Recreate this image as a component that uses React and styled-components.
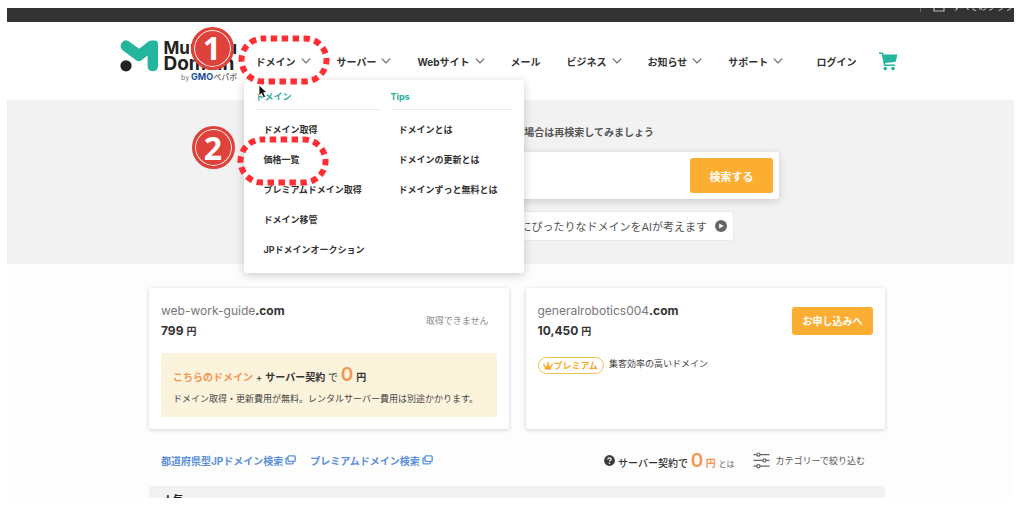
import React from "react";
import styled, { createGlobalStyle, css } from "styled-components";

const mainMenu = [
  { label: "サーバー", more: true },
  { label: "Webサイト", more: true },
  { label: "メール" },
  { label: "ビジネス", more: true },
  { label: "お知らせ", more: true },
  { label: "サポート", more: true },
];

const tips = ["ドメインとは", "ドメインの更新とは", "ドメインずっと無料とは"];

function Chevron() {
  return (
    <svg width="10" height="6" viewBox="0 0 10 6" fill="none" stroke="#666" strokeWidth="1.1">
      <path d="M0.8 0.6L5 5L9.2 0.6" />
    </svg>
  );
}

function NewWindow() {
  return (
    <svg width="11" height="10" viewBox="0 0 11 10" fill="none" stroke="currentColor" strokeWidth="1.3">
      <rect x="3" y="0.8" width="7.2" height="5.6" rx="1" />
      <path d="M3 3H1.9Q1 3 1 3.9V7.8Q1 8.8 2 8.8H7.2Q8.2 8.8 8.2 7.8V6.6" />
    </svg>
  );
}

function DottedRing() {
  return (
    <Ring width="92" height="50" viewBox="0 0 92 50" aria-hidden="true">
      <rect
        x="3.5"
        y="3.5"
        width="85"
        height="43"
        rx="21.5"
        fill="none"
        stroke="#ff2d34"
        strokeWidth="6"
        strokeDasharray="6.5 4.45"
        strokeDashoffset="3.25"
      />
    </Ring>
  );
}

function Logo() {
  return (
    <LogoLink href="#">
      <svg width="39" height="32" viewBox="0 0 39 32">
        <path
          d="M8.6 1.2L19.2 8.8L28.4 1.6Q30 0.4 32 0.4H34.6Q38 0.4 38 3.8V26Q38 31.2 32.8 31.2Q27.6 31.2 27.6 26V15.4L21.6 20.2Q19 22.2 16.2 20.2L2.6 10.2Q-0.6 7.4 1.4 3.2Q4.2 -1.4 8.6 1.2Z"
          fill="#23b59d"
        />
        <circle cx="6" cy="25.8" r="5.6" fill="#222" />
      </svg>
      <LogoText>
        <LogoName>Muumuu</LogoName>
        <LogoName $large>Domain</LogoName>
        <LogoBy>
          by <b>GMO</b>
          <span>ペパボ</span>
        </LogoBy>
      </LogoText>
      <Step $top="-13px" $left="71px">1</Step>
    </LogoLink>
  );
}

function DomainMenu() {
  return (
    <Menu>
      <div>
        <MenuTitle>ドメイン</MenuTitle>
        <MenuList>
          <MenuItem><a href="#">ドメイン取得</a></MenuItem>
          <MenuItem>
            <a href="#">価格一覧</a>
            <RingSpot $top="-9px" $left="-27px"><DottedRing /></RingSpot>
            <Step $top="-19px" $left="-72px">2</Step>
          </MenuItem>
          <MenuItem><a href="#">プレミアムドメイン取得</a></MenuItem>
          <MenuItem><a href="#">ドメイン移管</a></MenuItem>
          <MenuItem><a href="#">JPドメインオークション</a></MenuItem>
        </MenuList>
      </div>
      <div>
        <MenuTitle>Tips</MenuTitle>
        <MenuList>
          {tips.map((t) => (
            <MenuItem key={t}><a href="#">{t}</a></MenuItem>
          ))}
        </MenuList>
      </div>
    </Menu>
  );
}

function Header() {
  return (
    <HeaderBar>
      <HeaderInner>
        <Logo />
        <Nav>
          <NavItem>
            <NavButton type="button" aria-expanded="true">ドメイン<Chevron /></NavButton>
            <DomainMenu />
            <RingSpot $top="-16px" $left="-18px"><DottedRing /></RingSpot>
            <Cursor width="11" height="15" viewBox="0 0 11 15">
              <path
                d="M1 1V11.6L3.5 9.4L5.4 13.8L7.6 12.8L5.7 8.6H9Z"
                fill="#111"
                stroke="#fff"
                strokeWidth="0.8"
              />
            </Cursor>
          </NavItem>
          {mainMenu.map((m) => (
            <NavItem key={m.label}>
              {m.more ? (
                <NavButton type="button">{m.label}<Chevron /></NavButton>
              ) : (
                <NavLink href="#">{m.label}</NavLink>
              )}
            </NavItem>
          ))}
        </Nav>
        <Account>
          <NavLink href="#">ログイン</NavLink>
          <CartLink href="#" aria-label="カート">
            <svg width="19" height="19" viewBox="0 0 19 19" fill="#23b59d">
              <path d="M0 0.4H3.3Q4.2 0.4 4.4 1.3L4.6 2.4H18.4L16.8 9.3Q16.6 10 15.9 10.1L6.2 11.1L6.5 12.4H16V14H5.9Q5 14 4.8 13.1L2.7 2.1H0Z" />
              <circle cx="6.2" cy="16.6" r="1.8" />
              <circle cx="14" cy="16.6" r="1.8" />
            </svg>
          </CartLink>
        </Account>
      </HeaderInner>
    </HeaderBar>
  );
}

function Hero() {
  return (
    <HeroArea>
      <HeroInner>
        <HeroLead>場合は再検索してみましょう</HeroLead>
        <SearchBox>
          <SearchInput type="text" aria-label="ドメイン検索" />
          <SearchButton type="submit">検索する</SearchButton>
        </SearchBox>
        <AiLink href="#">
          にぴったりなドメインをAIが考えます
          <svg width="12" height="12" viewBox="0 0 12 12">
            <circle cx="6" cy="6" r="6" fill="#666" />
            <path d="M4.2 3.4L8.8 6L4.2 8.6Z" fill="#fff" />
          </svg>
        </AiLink>
      </HeroInner>
    </HeroArea>
  );
}

function Results() {
  return (
    <Cards>
      <Card>
        <CardHead>
          <div>
            <DomainName>web-work-guide<b>.com</b></DomainName>
            <Price>799<small>円</small></Price>
          </div>
          <Unavailable>取得できません</Unavailable>
        </CardHead>
        <Offer>
          <OfferLine>
            <Orange>こちらのドメイン</Orange> + <b>サーバー契約</b> で <Zero>0</Zero> <b>円</b>
          </OfferLine>
          <OfferNote>ドメイン取得・更新費用が無料。レンタルサーバー費用は別途かかります。</OfferNote>
        </Offer>
      </Card>
      <Card>
        <CardHead>
          <div>
            <DomainName>generalrobotics004<b>.com</b></DomainName>
            <Price>10,450<small>円</small></Price>
          </div>
          <ApplyButton type="button">お申し込みへ</ApplyButton>
        </CardHead>
        <PremiumRow>
          <Premium>
            <svg width="10" height="8" viewBox="0 0 10 8" fill="#f6ae2d">
              <path d="M2 7.4L0.9 2.8L3.2 4.4L5 0.8L6.8 4.4L9.1 2.8L8 7.4Q5 8.2 2 7.4Z" />
              <circle cx="0.9" cy="2.7" r="0.9" />
              <circle cx="5" cy="1" r="1" />
              <circle cx="9.1" cy="2.7" r="0.9" />
            </svg>
            プレミアム
          </Premium>
          <span>集客効率の高いドメイン</span>
        </PremiumRow>
      </Card>
    </Cards>
  );
}

function ToolRow() {
  return (
    <Tools>
      <BlueLink href="#">都道府県型JPドメイン検索<NewWindow /></BlueLink>
      <BlueLink href="#">プレミアムドメイン検索<NewWindow /></BlueLink>
      <ZeroHelp href="#">
        <svg width="11" height="11" viewBox="0 0 11 11">
          <circle cx="5.5" cy="5.5" r="5.4" fill="#3a3a3a" />
          <path
            d="M3.8 4.4Q3.8 2.8 5.5 2.8Q7.2 2.8 7.2 4.2Q7.2 5 6.2 5.5Q5.5 5.9 5.5 6.6"
            fill="none"
            stroke="#fff"
            strokeWidth="1.2"
          />
          <circle cx="5.5" cy="8.3" r="0.8" fill="#fff" />
        </svg>
        <span>
          サーバー契約で <Zero>0</Zero> <Orange>円</Orange> <small>とは</small>
        </span>
      </ZeroHelp>
      <FilterButton type="button">
        <svg width="17" height="17" viewBox="0 0 17 17" fill="#fdfdfd" stroke="#666" strokeWidth="1.2">
          <path d="M0.5 2.6H16.5M0.5 8.4H16.5M0.5 14.2H16.5" />
          <circle cx="5.4" cy="2.6" r="1.6" />
          <circle cx="11.4" cy="8.4" r="1.6" />
          <circle cx="5.4" cy="14.2" r="1.6" />
        </svg>
        カテゴリーで絞り込む
      </FilterButton>
    </Tools>
  );
}

export default function App() {
  return (
    <>
      <GlobalStyle />
      <Page>
        <Screen>
          <BrowserBar>
            <BarDivider />
            <svg width="12" height="11" viewBox="0 0 12 11" fill="none" stroke="#bbb" strokeWidth="1.2">
              <path d="M1 1H4.6L5.8 2.4H11V10H1Z" />
            </svg>
            <BarText>すべてのブックマーク</BarText>
          </BrowserBar>
          <Header />
          <Hero />
          <Main>
            <Results />
            <ToolRow />
            <Popular>人気</Popular>
          </Main>
        </Screen>
      </Page>
    </>
  );
}

const GlobalStyle = createGlobalStyle`
  * {
    box-sizing: border-box;
  }
  body {
    margin: 0;
    background: #fff;
    color: #333;
    font-family: Inter, "Noto Sans CJK JP", sans-serif;
    font-size: 10px;
  }
  a {
    color: inherit;
    text-decoration: none;
  }
  button, input {
    font-family: inherit;
    color: inherit;
    border: none;
    background: none;
    padding: 0;
  }
  svg {
    display: block;
    flex-shrink: 0;
  }
`;

const Page = styled.div`
  height: 100vh;
  padding: 8px 10px 12px 7px;
`;

const Screen = styled.div`
  height: 100%;
  overflow: hidden;
  background: #fdfdfd;
`;

const BrowserBar = styled.div`
  display: flex;
  justify-content: flex-end;
  align-items: flex-end;
  height: 14px;
  padding-bottom: 10px;
  background: #333;
`;

const BarDivider = styled.span`
  width: 1px;
  height: 12px;
  margin-right: 12px;
  background: #666;
`;

const BarText = styled.span`
  width: 62px;
  margin-left: 7px;
  overflow: hidden;
  white-space: nowrap;
  color: #ccc;
  font-size: 9px;
  line-height: 10px;
`;

const HeaderBar = styled.header`
  height: 78px;
  background: #fff;
`;

const HeaderInner = styled.div`
  display: flex;
  align-items: center;
  max-width: 782px;
  height: 100%;
  margin: 0 auto;
  padding-right: 4px;
`;

const LogoLink = styled.a`
  position: relative;
  display: flex;
  gap: 5px;
  width: 118px;
  margin-right: 18px;
`;

const LogoText = styled.span`
  display: flex;
  flex-direction: column;
`;

const LogoName = styled.span`
  color: #222;
  font-size: ${(p) => (p.$large ? "19px" : "17px")};
  font-weight: 700;
  line-height: 16px;
`;

const LogoBy = styled.span`
  align-self: flex-end;
  color: #777;
  font-size: 7px;
  line-height: 10px;
  white-space: nowrap;
  b {
    color: #1c4f96;
    font-size: 9px;
  }
  span {
    color: #333;
    font-size: 8px;
  }
`;

const Step = styled.span`
  position: absolute;
  top: ${(p) => p.$top};
  left: ${(p) => p.$left};
  z-index: 4;
  display: flex;
  align-items: center;
  justify-content: center;
  width: 43px;
  height: 43px;
  border: 3px solid #df423b;
  border-radius: 50%;
  background: #df423b;
  box-shadow: inset 0 0 0 1px #fff;
  color: #fff;
  font-family: "Open Sans", sans-serif;
  font-size: 32px;
  font-weight: 700;
  line-height: 32px;
`;

const Nav = styled.nav`
  display: flex;
  gap: 26px;
`;

const NavItem = styled.div`
  position: relative;
`;

const navText = css`
  display: flex;
  align-items: center;
  gap: 5px;
  height: 20px;
  color: #333;
  font-size: 10px;
  font-weight: 700;
  white-space: nowrap;
`;

const NavButton = styled.button`
  ${navText}
`;

const NavLink = styled.a`
  ${navText}
`;

const Account = styled.div`
  display: flex;
  align-items: center;
  gap: 22px;
  margin-left: auto;
`;

const CartLink = styled.a`
  display: block;
`;

const RingSpot = styled.span`
  position: absolute;
  top: ${(p) => p.$top};
  left: ${(p) => p.$left};
  z-index: 3;
  pointer-events: none;
`;

const Ring = styled.svg`
  overflow: visible;
`;

const Cursor = styled.svg`
  position: absolute;
  top: 33px;
  left: 2px;
  z-index: 4;
`;

const Menu = styled.div`
  position: absolute;
  top: 29px;
  left: -12px;
  z-index: 2;
  display: grid;
  grid-template-columns: 124px 121px;
  gap: 11px;
  width: 280px;
  padding: 7px 12px 8px;
  border-radius: 3px;
  background: #fff;
  box-shadow: 0 2px 10px rgba(0, 0, 0, 0.2);
`;

const MenuTitle = styled.div`
  padding-bottom: 2px;
  border-bottom: 1px solid #e8e8e8;
  color: #2bb09a;
  font-size: 9px;
  font-weight: 700;
  line-height: 20px;
`;

const MenuList = styled.ul`
  margin: 0;
  padding: 5px 0 0 8px;
  list-style: none;
`;

const MenuItem = styled.li`
  position: relative;
  height: 30px;
  color: #333;
  font-size: 9px;
  font-weight: 700;
  line-height: 30px;
  white-space: nowrap;
`;

const HeroArea = styled.section`
  height: 164px;
  padding: 22px 0 0 13px;
  background: #f2f2f2;
`;

const HeroInner = styled.div`
  display: flex;
  flex-direction: column;
  align-items: flex-end;
  max-width: 524px;
  margin: 0 auto;
`;

const HeroLead = styled.p`
  margin: 0;
  padding-right: 125px;
  color: #555;
  font-weight: 700;
  line-height: 20px;
`;

const SearchBox = styled.form`
  display: flex;
  width: 100%;
  margin-top: 10px;
  padding: 6px;
  border-radius: 3px;
  background: #fff;
  box-shadow: 0 2px 8px rgba(0, 0, 0, 0.16);
`;

const SearchInput = styled.input`
  flex: 1;
  min-width: 0;
  padding: 0 12px;
  font-size: 13px;
`;

const orangeButton = css`
  border-radius: 3px;
  background: #fbae31;
  color: #fff;
  font-weight: 700;
`;

const SearchButton = styled.button`
  ${orangeButton}
  width: 83px;
  height: 35px;
  font-size: 11px;
`;

const AiLink = styled.a`
  display: flex;
  align-items: center;
  justify-content: flex-end;
  gap: 8px;
  width: 434px;
  height: 30px;
  margin: 12px 45px 0 0;
  padding-right: 6px;
  border: 1px solid #e9e9e9;
  border-radius: 3px;
  background: #fff;
  color: #555;
  font-size: 11px;
`;

const Main = styled.main`
  padding: 24px 0 0 13px;
`;

const Cards = styled.div`
  display: grid;
  grid-template-columns: 1fr 1fr;
  gap: 17px;
  max-width: 736px;
  margin: 0 auto;
`;

const Card = styled.section`
  padding: 12px;
  border-radius: 3px;
  background: #fff;
  box-shadow: 0 1px 4px rgba(0, 0, 0, 0.18);
`;

const CardHead = styled.div`
  display: flex;
  align-items: center;
  justify-content: space-between;
  height: 41px;
`;

const DomainName = styled.div`
  color: #777;
  font-size: 12px;
  line-height: 20px;
  b {
    color: #333;
  }
`;

const Price = styled.div`
  color: #333;
  font-size: 12px;
  font-weight: 700;
  line-height: 20px;
  small {
    margin-left: 3px;
    font-size: 10px;
  }
`;

const Unavailable = styled.span`
  margin-right: 8px;
  color: #888;
  font-size: 9px;
`;

const ApplyButton = styled.button`
  ${orangeButton}
  width: 81px;
  height: 28px;
  font-size: 10px;
`;

const Offer = styled.div`
  margin-top: 12px;
  padding: 8px 12px;
  border-radius: 2px;
  background: #fcf3dc;
`;

const OfferLine = styled.div`
  height: 28px;
  line-height: 28px;
`;

const OfferNote = styled.div`
  color: #444;
  font-size: 9px;
  line-height: 20px;
`;

const Orange = styled.b`
  color: #f5964f;
`;

const Zero = styled.b`
  color: #f5964f;
  font-size: 19px;
  font-weight: 600;
`;

const PremiumRow = styled.div`
  display: flex;
  gap: 5px;
  margin-top: 16px;
  color: #444;
  font-size: 9px;
  line-height: 14px;
`;

const Premium = styled.span`
  display: flex;
  align-items: center;
  gap: 1px;
  height: 17px;
  padding: 0 5px 0 4px;
  border: 1px solid #f0c04e;
  border-radius: 9px;
  color: #f3ae2f;
  font-weight: 700;
`;

const Tools = styled.div`
  display: flex;
  align-items: center;
  max-width: 736px;
  height: 34px;
  margin: 14px auto 0;
  padding: 0 20px 0 12px;
  white-space: nowrap;
`;

const BlueLink = styled.a`
  display: flex;
  align-items: center;
  gap: 2px;
  margin-right: 14px;
  color: #5a8edb;
  font-weight: 700;
`;

const ZeroHelp = styled.a`
  display: flex;
  align-items: center;
  gap: 3px;
  margin-left: auto;
  font-weight: 500;
  small {
    color: #888;
    font-size: 8px;
  }
`;

const FilterButton = styled.button`
  display: flex;
  align-items: center;
  gap: 6px;
  margin-left: 18px;
  color: #555;
  font-size: 9px;
`;

const Popular = styled.h2`
  max-width: 736px;
  height: 30px;
  margin: 9px auto 0;
  padding: 6px 14px;
  border-radius: 3px 3px 0 0;
  background: #f2f2f2;
  color: #222;
  font-size: 10px;
  line-height: 14px;
`;
